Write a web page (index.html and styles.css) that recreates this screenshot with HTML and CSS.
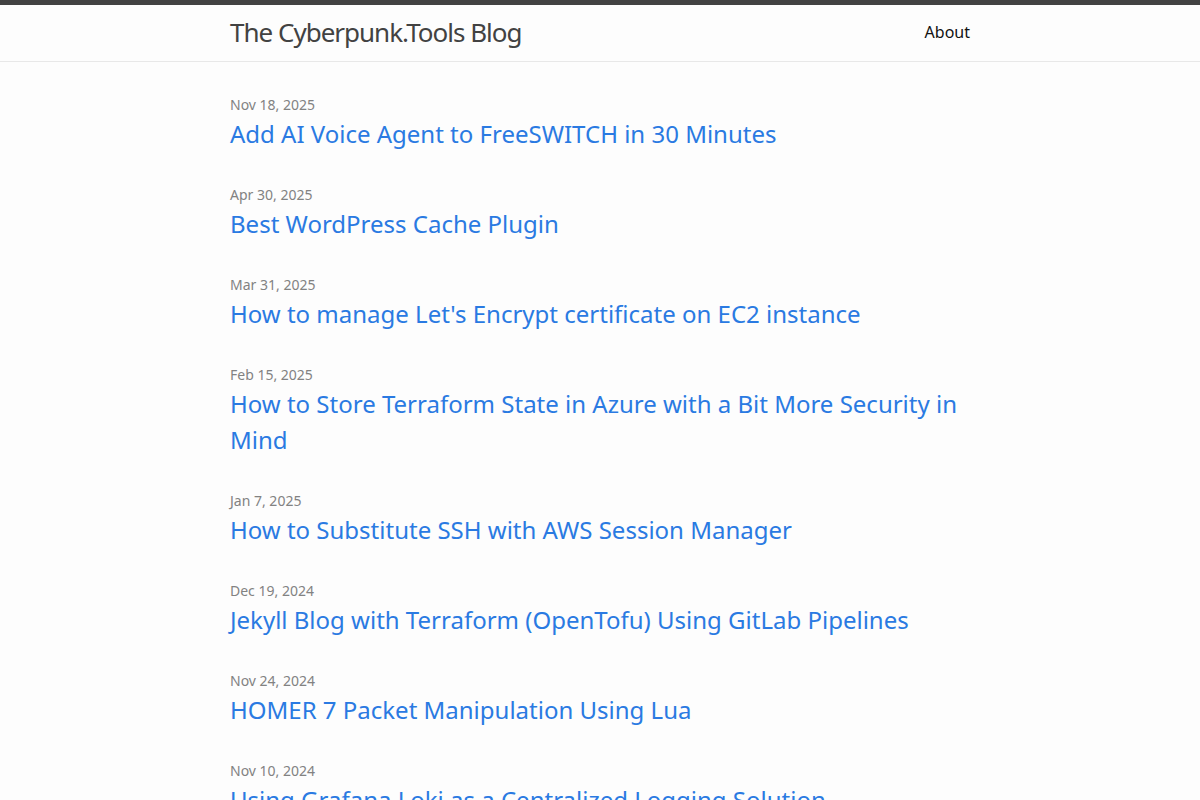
FILE: index.html
```html
<!DOCTYPE html>
<html lang="en">
<head>
<meta charset="utf-8">
<title>The Cyberpunk.Tools Blog</title>
<link rel="stylesheet" href="styles.css">
</head>
<body>
<header class="site-header">
  <div class="wrapper header-inner">
    <a class="site-title" href="#">The Cyberpunk.Tools Blog</a>
    <nav class="site-nav"><a class="page-link" href="#">About</a></nav>
  </div>
</header>
<main class="page-content">
  <div class="wrapper">
    <ul class="post-list">
      <li><span class="post-meta">Nov 18, 2025</span><h3><a class="post-link" href="#">Add AI Voice Agent to FreeSWITCH in 30 Minutes</a></h3></li>
      <li><span class="post-meta">Apr 30, 2025</span><h3><a class="post-link" href="#">Best WordPress Cache Plugin</a></h3></li>
      <li><span class="post-meta">Mar 31, 2025</span><h3><a class="post-link" href="#">How to manage Let's Encrypt certificate on EC2 instance</a></h3></li>
      <li><span class="post-meta">Feb 15, 2025</span><h3><a class="post-link" href="#">How to Store Terraform State in Azure with a Bit More Security in Mind</a></h3></li>
      <li><span class="post-meta">Jan 7, 2025</span><h3><a class="post-link" href="#">How to Substitute SSH with AWS Session Manager</a></h3></li>
      <li><span class="post-meta">Dec 19, 2024</span><h3><a class="post-link" href="#">Jekyll Blog with Terraform (OpenTofu) Using GitLab Pipelines</a></h3></li>
      <li><span class="post-meta">Nov 24, 2024</span><h3><a class="post-link" href="#">HOMER 7 Packet Manipulation Using Lua</a></h3></li>
      <li><span class="post-meta">Nov 10, 2024</span><h3><a class="post-link" href="#">Using Grafana Loki as a Centralized Logging Solution</a></h3></li>
    </ul>
  </div>
</main>
</body>
</html>
```

FILE: styles.css
```css
html, body {
  margin: 0;
  padding: 0;
}
body {
  background: #fdfdfd;
  color: #111111;
  font-family: "Noto Sans", "Open Sans", sans-serif;
  font-size: 16px;
  line-height: 1.5;
  font-weight: 400;
}
a {
  text-decoration: none;
}
.wrapper {
  max-width: 740px;
  margin: 0 auto;
  padding: 0 30px;
}
.site-header {
  border-top: 5px solid #424242;
  border-bottom: 1px solid #e8e8e8;
  min-height: 56px;
}
.header-inner {
  display: flex;
  justify-content: space-between;
  align-items: flex-start;
}
.site-title {
  font-size: 26px;
  font-weight: 400;
  line-height: 54px;
  letter-spacing: -1px;
  color: #424242;
}
.site-nav {
  line-height: 54px;
}
.page-link {
  color: #111111;
  line-height: 1.5;
}
.page-content {
  padding: 30px 0;
}
.post-list {
  list-style: none;
  margin: 0;
  padding: 0;
}
.post-list li {
  margin-bottom: 30px;
}
.post-meta {
  font-size: 14px;
  color: #828282;
}
.post-list h3 {
  margin: 0;
  font-weight: 400;
  font-size: 24px;
  line-height: 36px;
}
.post-link {
  display: block;
  color: #2a7ae2;
}
```
